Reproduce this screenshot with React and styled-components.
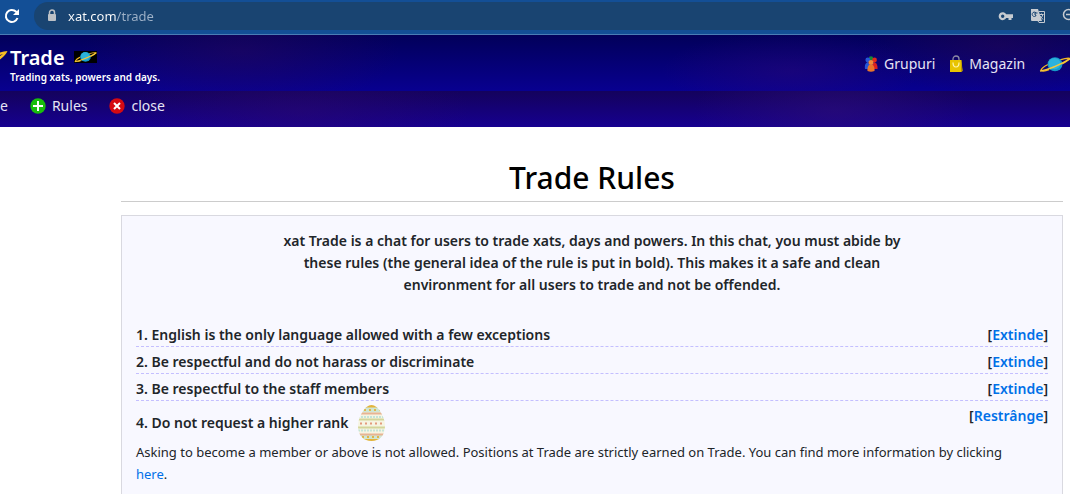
import React from "react";
import styled, { createGlobalStyle } from "styled-components";

const Global = createGlobalStyle`
  * { box-sizing: border-box; }
  body { margin: 0; background: #fff; color: #212529; font-family: "Noto Sans", "Open Sans", sans-serif; }
  h1, h2, p { margin: 0; font-weight: inherit; }
  svg { display: block; flex: none; }
  button { border: 0; padding: 0; background: none; font: inherit; color: inherit; cursor: pointer; }
  a { text-decoration: none; color: inherit; }
`;

const Page = styled.div`
  display: flex;
  flex-direction: column;
  height: 100vh;
  overflow: hidden;
`;

const BrowserBar = styled.div`
  display: flex;
  gap: 14px;
  flex: none;
  height: 35px;
  padding: 2px 0 4px 4px;
  background: #134f96;
  border-bottom: 1px solid #4a7db5;
  overflow: hidden;
`;

const ReloadButton = styled.button`
  display: flex;
  align-items: center;
  height: 28px;
`;

const AddressBar = styled.div`
  display: flex;
  align-items: center;
  flex: 1;
  height: 28px;
  padding-left: 12px;
  border-radius: 14px 0 0 14px;
  background: #194471;
`;

/* The host is white and the path is muted: the gradient is clipped to the text. */
const Address = styled.input`
  flex: 1;
  min-width: 0;
  margin-left: 10px;
  border: 0;
  padding: 0;
  outline: 0;
  font: inherit;
  font-size: 13px;
  line-height: 20px;
  color: transparent;
  background: linear-gradient(to right, #fff 49px, #9fb2c8 49px);
  background-clip: text;
`;

const BarTools = styled.div`
  display: flex;
  align-items: center;
  gap: 16px;
  height: 28px;
  width: 72px;
`;

const Header = styled.header`
  display: flex;
  align-items: center;
  flex: none;
  height: 56px;
  padding-top: 2px;
  color: #fff;
  overflow: hidden;
  background:
    radial-gradient(ellipse 160px 60px at 240px 16px, rgba(50, 10, 90, 0.4), transparent),
    radial-gradient(ellipse 130px 40px at 74% 36px, rgba(50, 10, 120, 0.4), transparent),
    radial-gradient(ellipse 140px 50px at 1000px 10px, rgba(50, 10, 80, 0.4), transparent),
    linear-gradient(#02005a, #080090);
`;

const Brand = styled.div`
  flex: 1;
  margin-left: 2px;
`;

const BrandTitle = styled.div`
  display: flex;
  align-items: center;
  gap: 9px;
  height: 26px;
  font-size: 20px;
  font-weight: 600;
`;

const BrandText = styled.p`
  font-size: 10px;
  font-weight: 600;
  line-height: 14px;
`;

const TopLinks = styled.nav`
  display: flex;
  align-items: center;
  gap: 14px;
  flex: none;
  width: 206px;
`;

const IconLink = styled.a`
  display: flex;
  align-items: center;
  flex: none;
  gap: 6px;
  font-size: 14px;
  line-height: 20px;
  color: #e6e4f4;
`;

const SubNav = styled.nav`
  display: flex;
  align-items: flex-start;
  flex: none;
  gap: 22px;
  height: 36px;
  padding-top: 5px;
  background:
    radial-gradient(ellipse 170px 60px at 300px 20px, rgba(50, 10, 110, 0.4), transparent),
    radial-gradient(ellipse 140px 60px at 78% 20px, rgba(50, 16, 120, 0.5), transparent),
    linear-gradient(#14025c, #160090);
`;

const Main = styled.main`
  display: flex;
  flex-direction: column;
  flex: 1;
  padding: 27px 7px 0 121px;
`;

const Title = styled.h1`
  height: 48px;
  margin-bottom: 13px;
  border-bottom: 1px solid #ccc;
  text-align: center;
  font-size: 30px;
  font-weight: 500;
  line-height: 47px;
  color: #000;
`;

const RulesBox = styled.section`
  flex: 1;
  padding: 14px;
  border: 1px solid #d9d9e0;
  border-bottom: 0;
  background: #f8f8ff;
  font-size: 14px;
  line-height: 22px;
`;

const Intro = styled.p`
  max-width: 640px;
  margin: 0 auto 24px;
  text-align: center;
  font-weight: 600;
`;

const Rule = styled.div`
  display: flex;
  justify-content: space-between;
  align-items: flex-start;
  padding-top: 4px;
  border-bottom: ${(p) => (p.$open ? "0" : "1px dashed #c4bfff")};
  font-weight: 600;
`;

const RuleName = styled.h2`
  display: flex;
  align-items: center;
  gap: 9px;
  font-size: 14px;
`;

const RuleText = styled.p`
  padding-right: 16px;
  font-size: 13px;
`;

const Toggle = styled.button`
  color: #0070e8;
`;

const TextLink = styled.a`
  color: #0070e8;
`;

const Planet = ({ w, h, dark }) => (
  <svg width={w} height={h} viewBox="0 0 32 18" preserveAspectRatio="none" aria-hidden="true">
    {dark && <rect width="32" height="18" fill="#000" />}
    <path d="M9 9Q3 12 2 15Q4 17 10 14.500" fill="none" stroke="#f5b921" strokeWidth="1.400" />
    <path d="M21 4Q28 2 30.500 2.500Q29 5 23 8.500" fill="none" stroke="#f5b921" strokeWidth="1.400" />
    <circle cx="16" cy="8.800" r="7.400" fill="#1599c9" />
    <circle cx="15.500" cy="8" r="6" fill="#2cb2dc" />
    <path d="M1 16Q14 13.500 31 3" fill="none" stroke="#f7c838" strokeWidth="1.500" />
  </svg>
);

const Tip = () => (
  <svg width="8" height="34" viewBox="0 0 8 34" aria-hidden="true">
    <path d="M0 5.500Q4 4 7.500 4Q6 8 0 12.500V9L3 7L0 8Z" fill="#f7bd22" />
  </svg>
);

const Reload = () => (
  <svg width="16" height="16" viewBox="0 0 16 16" aria-hidden="true">
    <path d="M13.500 10A6 6 0 1 1 12.200 3.800L13 4.600" fill="none" stroke="#fff" strokeWidth="2" />
    <path d="M15 1V7H9Z" fill="#fff" />
  </svg>
);

const Lock = () => (
  <svg width="12" height="14" viewBox="0 0 12 14" aria-hidden="true">
    <path d="M3.500 6V3.500A2.500 2.500 0 0 1 8.500 3.500V6" fill="none" stroke="#bcc1c6" strokeWidth="1.500" />
    <rect x="2" y="5" width="8" height="7" rx="1" fill="#bcc1c6" />
  </svg>
);

const Key = () => (
  <svg width="16" height="16" viewBox="0 0 16 16" aria-hidden="true">
    <path fillRule="evenodd" d="M8.200 6.300H15V10H13.500V12H10.500V10H8.200A4 4 0 1 1 8.200 6.300ZM4.700 6.500A1.700 1.700 0 1 0 4.700 9.900A1.700 1.700 0 0 0 4.700 6.500Z" fill="#c6cbd1" />
  </svg>
);

const Translate = () => (
  <svg width="16" height="16" viewBox="0 0 16 16" aria-hidden="true">
    <path d="M1 1H8L12 13H2Q1 13 1 12Z" fill="#c6cbd1" />
    <path d="M7.500 5H5V7H6Q6 8.500 4.500 8.500A2.200 2.200 0 1 1 6 4.800" fill="none" stroke="#194471" />
    <path d="M9 3.500H14.500V14.500H9L8 13" fill="none" stroke="#c6cbd1" />
    <path d="M9.500 6.500H13.500M11.500 5.500V6.500M13 6.500Q12 10 9.500 11M10 8L13 11.500" fill="none" stroke="#c6cbd1" />
  </svg>
);

const ZoomOut = () => (
  <svg width="16" height="16" viewBox="0 0 16 16" aria-hidden="true">
    <circle cx="6.500" cy="6.500" r="5" fill="none" stroke="#c6cbd1" strokeWidth="1.500" />
    <path d="M4 6.500H9M10.500 10.500L15 15" stroke="#c6cbd1" strokeWidth="1.500" />
  </svg>
);

const People = () => (
  <svg width="14" height="16" viewBox="0 0 14 16" aria-hidden="true">
    <circle cx="7" cy="2.500" r="2.300" fill="#168a36" />
    <circle cx="3.800" cy="4" r="2.400" fill="#2456d8" />
    <path d="M1 13Q0 8 3.500 6L6 9V13Z" fill="#2456d8" />
    <circle cx="10.500" cy="4" r="2.400" fill="#e02a1c" />
    <path d="M8 13V9L10.500 6Q14 8 13.500 13Z" fill="#d92020" />
    <circle cx="7" cy="6.500" r="2.500" fill="#f18a3c" />
    <path d="M5 9H9Q11 11 10.500 15Q7 16.500 3.500 15Q3 11 5 9Z" fill="#e9752b" />
  </svg>
);

const Bag = () => (
  <svg width="14" height="18" viewBox="0 0 14 18" aria-hidden="true">
    <path d="M4 6V4A3 3 0 0 1 10 4V6" fill="none" stroke="#8d8aa5" strokeWidth="1.300" />
    <path d="M1 5H12.500L13.500 16L12 17H1Z" fill="#e8c400" />
    <path d="M12 5L13.500 16L12 17Z" fill="#b89500" />
    <path d="M4 7.500Q4 12 7 12T10 7.500" fill="none" stroke="#fff5b0" strokeWidth="1.200" />
  </svg>
);

const Badge = ({ color, d }) => (
  <svg width="16" height="16" viewBox="0 0 16 16" aria-hidden="true">
    <circle cx="8" cy="8" r="7.700" fill={color} />
    <path d={d} stroke="#fff" strokeWidth="2" />
  </svg>
);

const Egg = () => (
  <svg width="27" height="36" viewBox="0 0 27 36" aria-hidden="true">
    <clipPath id="egg-shape"><path d="M13.500 0C20 0 27 12 27 21C27 31 21 36 13.500 36S0 31 0 21C0 12 7 0 13.500 0Z" /></clipPath>
    <g clipPath="url(#egg-shape)">
      <rect width="27" height="36" fill="#f6f4e2" />
      <path d="M0 1.500H27M0 35H27" stroke="#e2b43c" strokeWidth="3" />
      <path d="M0 5H27M0 31.500H27" stroke="#cfe6d4" strokeWidth="5" />
      <path d="M6 5H22M4 32H24" stroke="#dfb64b" strokeWidth="2" strokeDasharray="2 3" />
      <path d="M0 8.500H27M0 29.500H27" stroke="#e8b493" strokeWidth="2" />
      <path d="M0 12H27M0 25.500H27" stroke="#c3e4d8" strokeWidth="2" strokeDasharray="2 1" />
      <path d="M0 14.500H27M0 22.500H27" stroke="#d3d59a" strokeWidth="2" />
      <path d="M2 18.500H27" stroke="#e39a7c" strokeWidth="2" strokeDasharray="2 3" />
    </g>
  </svg>
);

const rules = [
  "1. English is the only language allowed with a few exceptions",
  "2. Be respectful and do not harass or discriminate",
  "3. Be respectful to the staff members",
];

export default function App() {
  return (
    <Page>
      <Global />
      <BrowserBar>
        <ReloadButton aria-label="Reload"><Reload /></ReloadButton>
        <AddressBar>
          <Lock />
          <Address aria-label="Address" defaultValue="xat.com/trade" />
          <BarTools>
            <button aria-label="Passwords"><Key /></button>
            <button aria-label="Translate"><Translate /></button>
            <button aria-label="Zoom"><ZoomOut /></button>
          </BarTools>
        </AddressBar>
      </BrowserBar>
      <Header>
        <Tip />
        <Brand>
          <BrandTitle>Trade <Planet w={23} h={12} dark /></BrandTitle>
          <BrandText>Trading xats, powers and days.</BrandText>
        </Brand>
        <TopLinks>
          <IconLink href="#groups"><People />Grupuri</IconLink>
          <IconLink href="#shop"><Bag />Magazin</IconLink>
          <IconLink href="#home" aria-label="xat"><Planet w={32} h={17} /></IconLink>
        </TopLinks>
      </Header>
      <SubNav>
        <IconLink as="span">e</IconLink>
        <IconLink href="#rules"><Badge color="#19bd0c" d="M8 3V13M3 8H13" />Rules</IconLink>
        <IconLink href="#close"><Badge color="#d40a12" d="M5 5L11 11M11 5L5 11" />close</IconLink>
      </SubNav>
      <Main>
        <Title>Trade Rules</Title>
        <RulesBox>
          <Intro>
            xat Trade is a chat for users to trade xats, days and powers. In this chat, you must abide by
            these rules (the general idea of the rule is put in bold). This makes it a safe and clean
            environment for all users to trade and not be offended.
          </Intro>
          {rules.map((name) => (
            <Rule key={name}>
              <RuleName>{name}</RuleName>
              <span>[<Toggle>Extinde</Toggle>]</span>
            </Rule>
          ))}
          <Rule $open>
            <RuleName>4. Do not request a higher rank <Egg /></RuleName>
            <span>[<Toggle>Restrânge</Toggle>]</span>
          </Rule>
          <RuleText>
            Asking to become a member or above is not allowed. Positions at Trade are strictly earned on
            Trade. You can find more information by clicking <TextLink href="#ranks">here</TextLink>.
          </RuleText>
        </RulesBox>
      </Main>
    </Page>
  );
}
